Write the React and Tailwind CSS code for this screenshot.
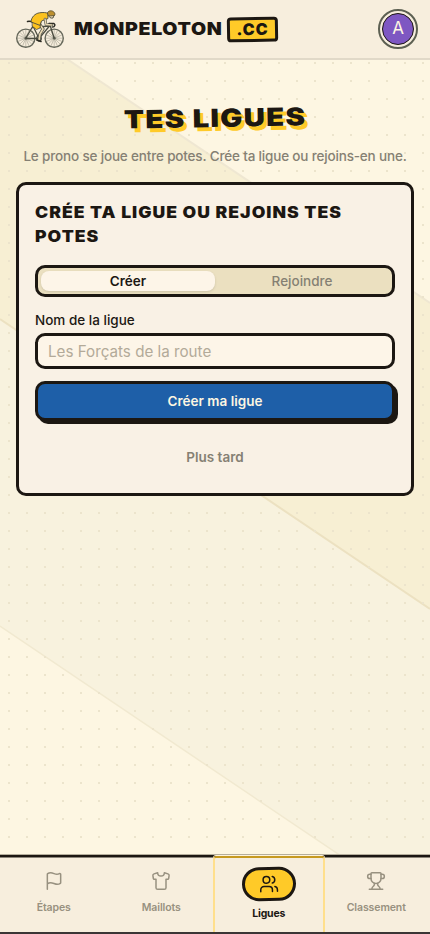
import React from 'react';
import { Flag, Shirt, Trophy, Users } from 'lucide-react';

const tabs = [
  { id: 'etapes', label: 'Étapes', icon: Flag },
  { id: 'maillots', label: 'Maillots', icon: Shirt },
  { id: 'ligues', label: 'Ligues', icon: Users },
  { id: 'classement', label: 'Classement', icon: Trophy },
];

const Wheel = ({ cx, cy }) => (
  <g stroke="#66685b">
    <circle cx={cx} cy={cy} r="9.1" strokeWidth="1.4" />
    <g strokeWidth="0.4" opacity="0.8">
      {[0, 22.5, 45, 67.5, 90, 112.5, 135, 157.5].map((angle) => (
        <path key={angle} d={`M${cx - 8.5} ${cy}h17`} transform={`rotate(${angle} ${cx} ${cy})`} />
      ))}
    </g>
    <circle cx={cx} cy={cy} r="1" fill="#66685b" />
  </g>
);

const CyclistLogo = () => (
  <svg width="48" height="39" viewBox="0 0 48 39" fill="none" strokeLinecap="round" strokeLinejoin="round">
    <Wheel cx={9.8} cy={28.2} />
    <Wheel cx={38.2} cy={28.2} />
    {/* frame */}
    <path d="M9.8 28.2 17 16l6 12.5H9.8M17 17.5 33.5 16 23 28.5M33.5 13.5l4.7 14.7" stroke="#4b4c40" strokeWidth="1.3" />
    <path d="M11.5 11.5c2-.5 4 0 6 .5M33 13.5h5c1.500 1 1 3.500-1.500 3.500" stroke="#2c2b23" strokeWidth="1.5" />
    <circle cx="23" cy="28.5" r="2.4" stroke="#4b4c40" strokeWidth="1.1" />
    {/* legs */}
    <path d="m24 15 3 4-3 5-1 6" stroke="#4b4c40" strokeWidth="3.2" />
    <path d="m24 15 3 4-3 5-1 6" stroke="#e9d9b4" strokeWidth="1.7" />
    <path d="m21 30 4 1.5" stroke="#2c2b23" strokeWidth="1.6" />
    <path d="M16.5 10.5 25 12l-1 6-3.500 1.500-4-3z" fill="#fcc21f" stroke="#4b4c40" strokeWidth="0.8" />
    {/* jersey */}
    <path d="M15 11.5C15.5 7 19 3.500 23.500 2.800c3.500-.6 7-.3 8.300.7l.2 5-6.500 2.500-1.500 4z" fill="#fcc21f" stroke="#4b4c40" strokeWidth="0.9" />
    <path d="m29 9 1 5.5 6 .5" stroke="#4b4c40" strokeWidth="2.6" />
    <path d="m29 9 1 5.5 6 .5" stroke="#e9d9b4" strokeWidth="1.4" />
    <path d="M33 5.5c0 2 1.500 3 4 2.500l1.200-3" fill="#e9d9b4" stroke="#4b4c40" strokeWidth="0.9" />
    <path d="M31.5 2.5c2-3 6.500-2 7.500 1.500l-.5 1.500-5.500.5z" fill="#bd902f" stroke="#5d5434" strokeWidth="0.9" />
  </svg>
);

const RoadBackground = () => (
  <svg className="absolute inset-0 -z-10" width="430" height="934" viewBox="0 0 430 934">
    <defs>
      <pattern id="dots" x="8" y="8" width="18" height="18" patternUnits="userSpaceOnUse">
        <rect width="2" height="2" fill="#ece4cc" />
      </pattern>
    </defs>
    <rect width="430" height="934" fill="#fdf6e2" />
    <path d="M0 14 430 303v306L0 319z" fill="#f7efd3" />
    <path d="M0 319 430 609v307L0 626z" fill="#f8f2de" />
    <path d="M0 14 430 303" stroke="#efe7d2" strokeWidth="2" />
    <path d="M0 319 430 609" stroke="#ece1c1" strokeWidth="2" />
    <path d="M0 626 430 916" stroke="#f1e9d0" strokeWidth="1.5" />
    <rect width="430" height="934" fill="url(#dots)" />
  </svg>
);

const Header = () => (
  <header className="flex h-[60px] items-center justify-between border-b-2 border-[#e1d9c8] bg-[#f7eedd] pl-4 pr-3">
    <div className="flex items-center">
      <CyclistLogo />
      <span className="ml-[10px] w-[153px] origin-left scale-x-115 whitespace-nowrap text-[17px] font-black leading-6 tracking-[0.6px]">
        MONPELOTON
      </span>
      <span className="flex h-[25px] w-[51px] -rotate-1 items-center justify-center rounded-[4px] border-[3px] border-[#1c1712] bg-[#ffca28] pb-px text-[16px] font-black leading-none tracking-[1px]">
        .CC
      </span>
    </div>
    <div className="flex size-10 items-center justify-center rounded-full border-2 border-[#5d6052]">
      <div className="flex size-8 items-center justify-center rounded-full border border-[#1c1712] bg-[#7e57c2] text-[17px] text-[#fdf6e2]">
        A
      </div>
    </div>
  </header>
);

const LeagueCard = () => (
  <section className="mx-4 mt-[16px] h-[314px] rounded-[10px] border-[3px] border-[#1c1712] bg-[#f9f1e5] px-4 pt-[15px]">
    <h2 className="origin-left scale-x-110 whitespace-nowrap text-[16px] font-black leading-6 tracking-[0.93px]">
      CRÉE TA LIGUE OU REJOINS TES
      <br />
      POTES
    </h2>
    <div className="mt-[17px] grid h-8 grid-cols-2 rounded-[10px] border-[3px] border-[#1c1712] bg-[#ebe0c0] p-[3px] text-[13.5px] font-medium">
      <button className="flex items-center justify-center rounded-lg bg-[#fdf5e8] font-semibold shadow-sm">Créer</button>
      <button className="flex items-center justify-center text-[#858073]">Rejoindre</button>
    </div>
    <label className="mt-[13px] block text-[13.5px] font-medium leading-5">Nom de la ligue</label>
    <input
      className="mt-[3px] block h-9 w-full rounded-[10px] border-[3px] border-[#1c1712] bg-[#fdf5e8] px-[10px] text-[15.2px] placeholder:text-[#b3aa99]"
      placeholder="Les Forçats de la route"
    />
    <button className="mt-3 block h-10 w-full rounded-[10px] border-[3px] border-[#1c1712] bg-[#1e5fa8] text-[13.5px] font-semibold text-[#fdf6e2] shadow-[3px_3px_0_#1c1712]">
      Créer ma ligue
    </button>
    <button className="mt-[26px] block h-5 w-full text-[13.5px] font-semibold text-[#858073]">Plus tard</button>
  </section>
);

const BottomNav = () => (
  <nav className="grid h-[79px] grid-cols-4 border-b-2 border-t-2 border-b-[#3b3535] border-t-[#1c1712] bg-[#f7eedd] shadow-[0_-1px_0_#b5ae9c,inset_0_1px_0_#8b8579]">
    {tabs.map(({ id, label, icon: Icon }) =>
      id === 'ligues' ? (
        <a key={id} className="-ml-[2px] -mr-[2px] -mt-px flex flex-col items-center rounded-t-[3px] border-2 border-b-0 border-[#ffdf8c] border-t-[#c79a21] pt-[9px] shadow-[0_-1px_0_#fdf3dc]">
          <span className="flex h-[34px] w-[54px] -rotate-1 items-center justify-center rounded-full border-[3px] border-[#1c1712] bg-[#ffca28]">
            <Icon size={20} strokeWidth={1.8} />
          </span>
          <span className="mt-[5px] text-[10.5px] font-bold leading-4 tracking-[-0.2px]">{label}</span>
        </a>
      ) : (
        <a key={id} className="flex flex-col items-center pt-[14px] text-[#989180]">
          <Icon size={20} strokeWidth={1.8} />
          <span className="mt-[9px] text-[10.5px] font-semibold leading-4 tracking-[-0.1px]">{label}</span>
        </a>
      )
    )}
  </nav>
);

export default function App() {
  return (
    <div className="relative isolate flex h-[934px] w-[430px] flex-col overflow-hidden font-[Inter,sans-serif] text-[#1c1712]">
      <RoadBackground />
      <Header />
      <main className="flex-1">
        <h1 className="mt-[40px] -rotate-1 scale-x-118 text-center text-[25px] font-black leading-9 tracking-[1px] [text-shadow:3px_4px_0_#ffca28]">
          TES LIGUES
        </h1>
        <p className="mt-[10px] whitespace-nowrap text-center text-[13.5px] font-medium leading-5 tracking-[-0.17px] text-[#858073]">
          Le prono se joue entre potes. Crée ta ligue ou rejoins-en une.
        </p>
        <LeagueCard />
      </main>
      <BottomNav />
    </div>
  );
}
